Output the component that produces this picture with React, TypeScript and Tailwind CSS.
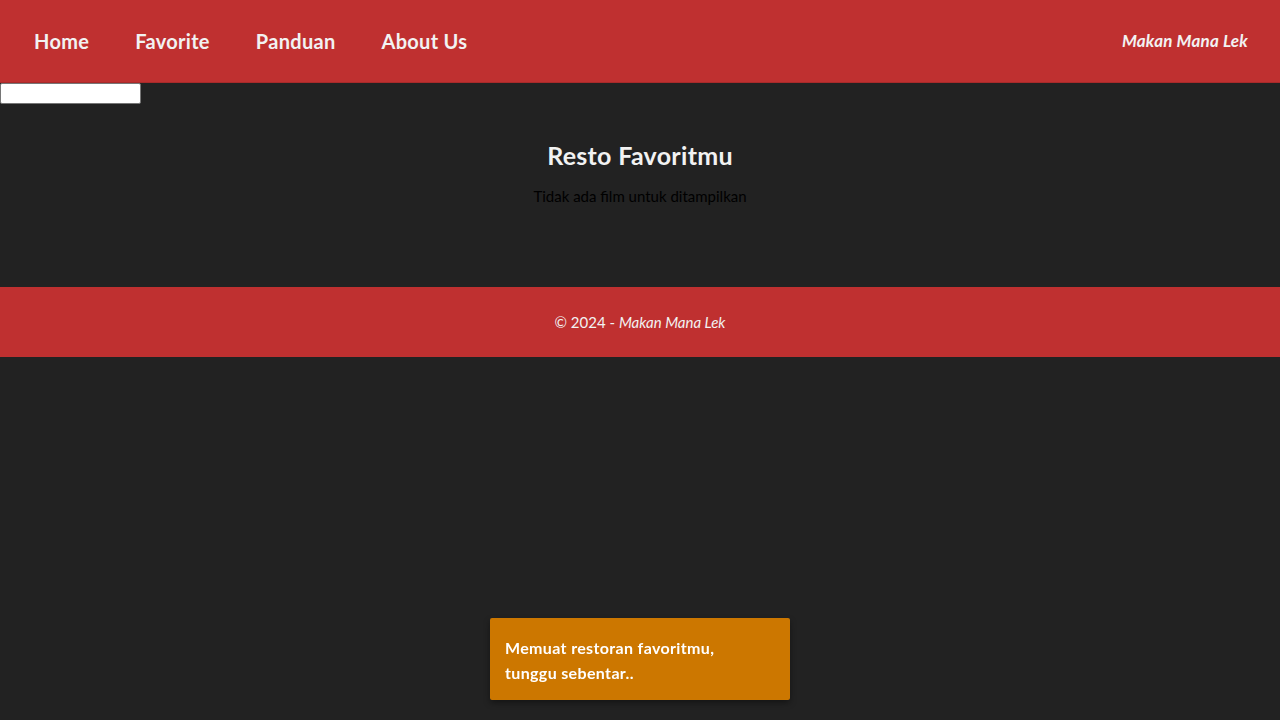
import React from "react";

export default function App() {
  const font = { fontFamily: "Lato, 'Open Sans', sans-serif" };
  return (
    <div className="min-h-[720px] bg-[#222222]" style={font}>
      <header className="h-[83px] bg-[#bf3030] border-b border-[#a82a2a] flex items-center justify-between px-[11px]">
        <nav className="flex items-center">
          {["Home", "Favorite", "Panduan", "About Us"].map((t) => (
            <a key={t} className="px-[23px] text-[20px] font-bold text-[#f2f2f2] tracking-[0.3px]">
              {t}
            </a>
          ))}
        </nav>
        <div className="pr-[21px] text-[17px] font-bold italic text-[#f2f2f2] tracking-[0.2px]">Makan Mana Lek</div>
      </header>
      <input type="text" className="block w-[141px] h-[21px] bg-white border border-[#767676] rounded-[2px]" />
      <main className="flex flex-col items-center pt-[35px] h-[183px]">
        <h2 className="text-[25px] font-bold text-[#f2f2f2] leading-[32px] tracking-[0.3px]">Resto Favoritmu</h2>
        <p className="mt-[14px] text-[15px] text-black">Tidak ada film untuk ditampilkan</p>
      </main>
      <footer className="h-[70px] bg-[#bf3030] flex items-center justify-center text-[15px] text-[#f2f2f2]">
        © 2024 -&nbsp;<span className="italic">Makan Mana Lek</span>
      </footer>
      <div className="fixed left-1/2 -translate-x-1/2 top-[618px] w-[300px] h-[82px] bg-[#cc7700] rounded-[2px] shadow-[0_3px_6px_rgba(0,0,0,0.4)] px-[15px] pt-[17px]">
        <p className="text-[16px] font-bold text-white leading-[25px] tracking-[0.35px]">
          Memuat restoran favoritmu,
          <br />
          tunggu sebentar..
        </p>
      </div>
    </div>
  );
}
